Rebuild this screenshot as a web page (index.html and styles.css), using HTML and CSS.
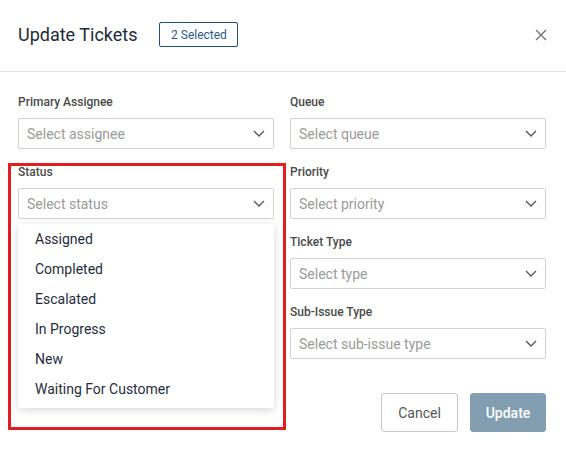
FILE: index.html
```html
<!DOCTYPE html>
<html lang="en">
<head>
<meta charset="utf-8">
<title>Update Tickets</title>
<link rel="stylesheet" href="styles.css">
</head>
<body>
<div class="modal">
  <header class="header">
    <h1 class="title">Update Tickets</h1>
    <span class="badge">2 Selected</span>
    <button class="close" aria-label="Close">
      <svg width="12" height="12" viewBox="0 0 12 12"><path d="M1 1L11 11M11 1L1 11" stroke="#6b6b6b" stroke-width="1.2" fill="none"/></svg>
    </button>
  </header>
  <div class="body">
    <div class="grid">
      <div class="col">
        <div class="field">
          <label class="label">Primary Assignee</label>
          <div class="select"><span>Select assignee</span><svg class="chev" width="12" height="7" viewBox="0 0 12 7"><path d="M1 1L6 6L11 1" stroke="#555" stroke-width="1.3" fill="none"/></svg></div>
        </div>
        <div class="field field-open">
          <label class="label">Status</label>
          <div class="select"><span>Select status</span><svg class="chev" width="12" height="7" viewBox="0 0 12 7"><path d="M1 1L6 6L11 1" stroke="#555" stroke-width="1.3" fill="none"/></svg></div>
          <ul class="menu">
            <li>Assigned</li>
            <li>Completed</li>
            <li>Escalated</li>
            <li>In Progress</li>
            <li>New</li>
            <li>Waiting For Customer</li>
          </ul>
        </div>
      </div>
      <div class="col">
        <div class="field">
          <label class="label">Queue</label>
          <div class="select"><span>Select queue</span><svg class="chev" width="12" height="7" viewBox="0 0 12 7"><path d="M1 1L6 6L11 1" stroke="#555" stroke-width="1.3" fill="none"/></svg></div>
        </div>
        <div class="field">
          <label class="label">Priority</label>
          <div class="select"><span>Select priority</span><svg class="chev" width="12" height="7" viewBox="0 0 12 7"><path d="M1 1L6 6L11 1" stroke="#555" stroke-width="1.3" fill="none"/></svg></div>
        </div>
        <div class="field">
          <label class="label">Ticket Type</label>
          <div class="select"><span>Select type</span><svg class="chev" width="12" height="7" viewBox="0 0 12 7"><path d="M1 1L6 6L11 1" stroke="#555" stroke-width="1.3" fill="none"/></svg></div>
        </div>
        <div class="field">
          <label class="label">Sub-Issue Type</label>
          <div class="select"><span>Select sub-issue type</span><svg class="chev" width="12" height="7" viewBox="0 0 12 7"><path d="M1 1L6 6L11 1" stroke="#555" stroke-width="1.3" fill="none"/></svg></div>
        </div>
      </div>
    </div>
    <div class="actions">
      <button class="btn btn-cancel">Cancel</button>
      <button class="btn btn-update">Update</button>
    </div>
  </div>
  <div class="highlight"></div>
</div>
</body>
</html>
```
FILE: styles.css
```css
* { box-sizing: border-box; }
html, body { margin: 0; padding: 0; background: #fff; }
body { font-family: Roboto, "Liberation Sans", sans-serif; color: #1d2b3a; }
.modal { position: relative; width: 566px; height: 455px; background: #fff; }
.header {
  height: 72px;
  display: flex;
  align-items: center;
  padding: 0 20px 2px 18px;
  border-bottom: 1px solid #e4e4e4;
}
.title { margin: 0; font-size: 18px; font-weight: 400; color: #1d2b3a; line-height: 24px; }
.badge {
  margin-left: 22px;
  height: 25px;
  width: 79px;
  display: flex; align-items: center; justify-content: center;
  border: 1px solid #1f4f7a;
  border-radius: 2px;
  font-size: 12px;
  color: #2d5b85;
}
.close {
  margin-left: auto;
  border: 0; background: none; padding: 0;
  width: 12px; height: 12px;
  display: flex; margin-right: 0;
  transform: translateX(1px);
}
.body { padding: 22px 20px 0 18px; }
.grid { display: grid; grid-template-columns: 256px 256px; column-gap: 16px; }
.field { margin-bottom: 15px; position: relative; }
.label { display: block; font-size: 12px; line-height: 16px; font-weight: 500; color: #4a4a4a; margin-bottom: 8px; }
.select {
  height: 31px;
  border: 1px solid #d2d2d2;
  border-radius: 2px;
  display: flex; align-items: center;
  padding: 0 8px 0 8px;
  font-size: 14px;
  color: #9a9a9a;
}
.select .chev { margin-left: auto; }
.menu {
  position: absolute;
  left: 0; right: 0; top: 60px;
  margin: 0; padding: 0 0 4px;
  list-style: none;
  background: #fff;
  border-radius: 3px;
  box-shadow: 0 2px 8px rgba(0,0,0,0.16);
  z-index: 2;
}
.menu li { height: 30px; line-height: 30px; padding-left: 17px; font-size: 14px; color: #1f2d3d; }
.actions { display: flex; justify-content: flex-end; gap: 12px; margin-top: 19px; }
.btn {
  height: 39px;
  border-radius: 3px;
  font-family: inherit;
  font-size: 14px;
  padding: 0;
}
.btn-cancel { width: 77px; background: #fff; border: 1px solid #c8c8c8; color: #555; }
.btn-update { width: 76px; background: #839eb1; border: 1px solid #839eb1; color: #fff; font-weight: 500; }
.highlight {
  position: absolute;
  left: 8px; top: 163px;
  width: 278px; height: 267px;
  border: 3px solid #e31b23;
  pointer-events: none;
}
```
